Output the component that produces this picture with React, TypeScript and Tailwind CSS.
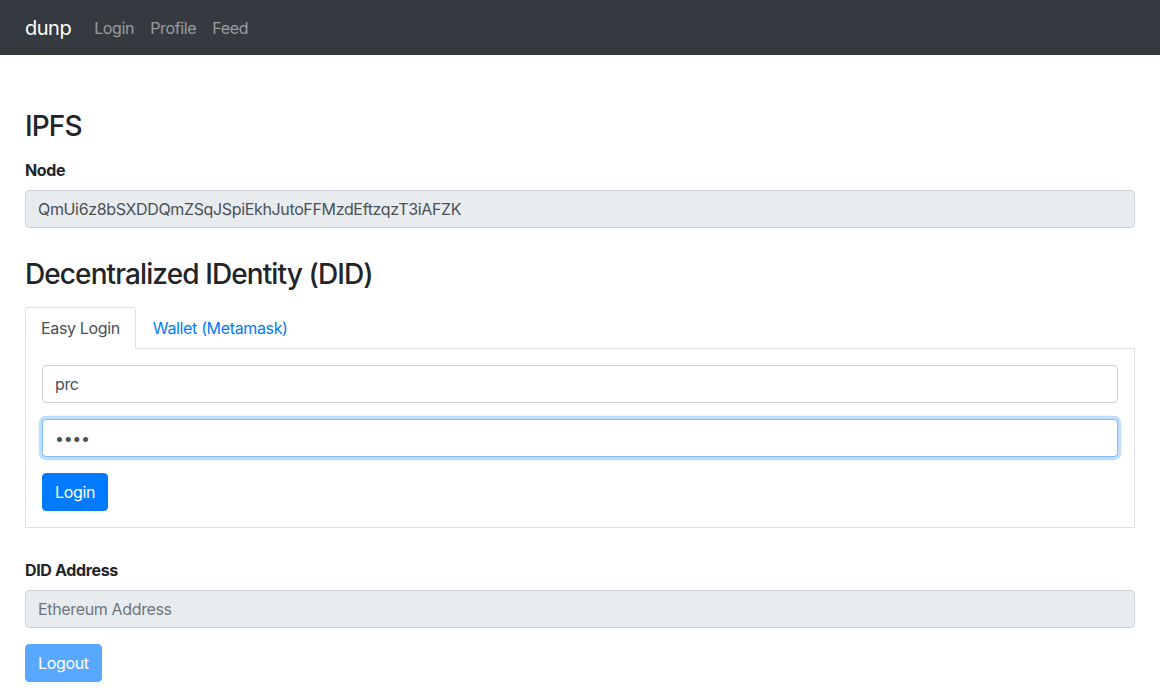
import React from "react";

export default function App() {
  return (
    <div className="min-h-[696px] bg-white text-[#212529] text-[16px] leading-[1.5] tracking-[-0.35px] font-['Inter','Noto_Sans',sans-serif]">
      <nav className="h-[55px] bg-[#343a40] flex items-center px-[25px]">
        <span className="text-white text-[20px] leading-[30px] mr-[15px] tracking-[-0.5px]">dunp</span>
        <a className="text-[rgba(255,255,255,0.5)] px-[8px] leading-[24px]">Login</a>
        <a className="text-[rgba(255,255,255,0.5)] px-[8px] leading-[24px]">Profile</a>
        <a className="text-[rgba(255,255,255,0.5)] px-[8px] leading-[24px]">Feed</a>
      </nav>

      <main className="px-[25px] pt-[55px]">
        <h2 className="text-[28px] leading-[1.2] font-medium tracking-[-0.9px] mb-[14px]">IPFS</h2>
        <div>
          <label className="block font-bold mb-[8px]">Node</label>
          <input
            readOnly
            value="QmUi6z8bSXDDQmZSqJSpiEkhJutoFFMzdEftzqzT3iAFZK"
            className="block w-full h-[38px] px-[12px] py-[6px] bg-[#e9ecef] border border-[#ced4da] rounded-[4px] text-[#495057] text-[16px] tracking-[-0.35px] outline-none"
          />
        </div>

        <h2 className="mt-[30px] text-[28px] leading-[1.2] font-medium tracking-[-0.9px] mb-[16px]">
          Decentralized IDentity (DID)
        </h2>

        <div className="flex border-b border-[#dee2e6]">
          <div className="-mb-px px-[15px] py-[8px] border border-[#dee2e6] border-b-white bg-white rounded-t-[4px] text-[#495057]">
            Easy Login
          </div>
          <div className="-mb-px px-[16px] py-[8px] border border-transparent text-[#007bff]">
            Wallet (Metamask)
          </div>
        </div>
        <div className="border border-t-0 border-[#dee2e6] p-[16px] flex flex-col gap-[16px]">
          <input
            readOnly
            value="prc"
            className="block w-full h-[38px] px-[12px] py-[6px] bg-white border border-[#ced4da] rounded-[4px] text-[#495057] text-[16px] tracking-[-0.35px] outline-none"
          />
          <input
            readOnly
            type="password"
            value="abcd"
            className="block w-full h-[38px] px-[12px] py-[6px] bg-white border border-[#80bdff] rounded-[4px] text-[#495057] text-[16px] outline-none shadow-[0_0_0_3.2px_rgba(0,123,255,0.25)]"
          />
          <div>
            <button className="h-[38px] px-[12px] bg-[#007bff] text-white rounded-[4px] border border-[#007bff]">
              Login
            </button>
          </div>
        </div>

        <div className="mt-[30px]">
          <label className="block font-bold mb-[8px]">DID Address</label>
          <input
            readOnly
            placeholder="Ethereum Address"
            className="block w-full h-[38px] px-[12px] py-[6px] bg-[#e9ecef] border border-[#ced4da] rounded-[4px] text-[#495057] placeholder:text-[#6c757d] text-[16px] tracking-[-0.35px] outline-none"
          />
        </div>
        <button className="mt-[16px] h-[38px] px-[12px] bg-[#007bff] opacity-[0.65] text-white rounded-[4px] border border-[#007bff]">
          Logout
        </button>
      </main>
    </div>
  );
}
